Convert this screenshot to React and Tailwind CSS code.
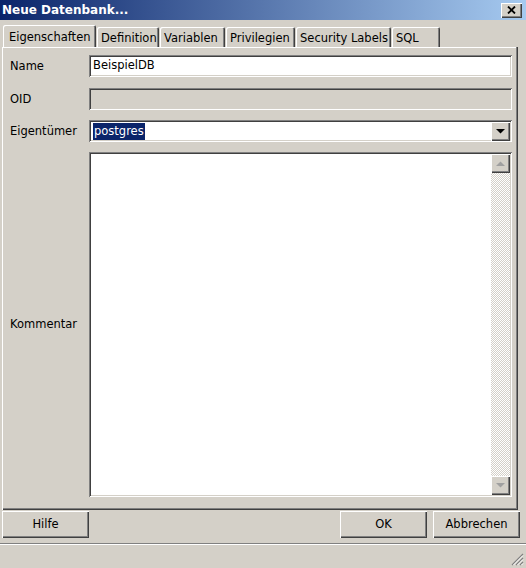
import React from "react";

const raised =
  "shadow-[inset_1px_1px_0_#ffffff,inset_-1px_-1px_0_#404040,inset_-2px_-2px_0_#808080]";
const sunken =
  "shadow-[inset_1px_1px_0_#808080,inset_-1px_-1px_0_#ffffff,inset_2px_2px_0_#404040,inset_-2px_-2px_0_#d4d0c8]";

function Tab({ label, active, w }) {
  return (
    <div
      className={
        "relative flex items-start rounded-t-[2px] bg-[#d4d0c8] shadow-[inset_1px_1px_0_#ffffff,inset_-1px_0_0_#404040,inset_-2px_0_0_#808080] " +
        (active ? "z-10 h-[22px] pl-[6px] pt-[4px]" : "h-[20px] pl-[4px] pt-[3px]")
      }
      style={{ width: w }}
    >
      <span className="whitespace-nowrap leading-[16px]">{label}</span>
    </div>
  );
}

function ScrollBtn({ up, dark }) {
  return (
    <div className={"flex h-[19px] w-[19px] items-center justify-center bg-[#d4d0c8] " + raised}>
      <svg width="9" height="5" viewBox="0 0 9 5">
        {up ? (
          <polygon points="0,5 9,5 4.5,0.5" fill={dark ? "#000" : "#a0a0a0"} />
        ) : (
          <polygon points="0,0 9,0 4.5,4.5" fill={dark ? "#000" : "#a0a0a0"} />
        )}
      </svg>
    </div>
  );
}

function Button({ label, w }) {
  return (
    <div
      className={"flex h-[27px] items-center justify-center bg-[#d4d0c8] " + raised}
      style={{ width: w }}
    >
      {label}
    </div>
  );
}

export default function App() {
  return (
    <div
      className="flex h-[568px] w-[526px] flex-col overflow-hidden bg-[#d4d0c8] text-[11.5px] text-black"
      style={{ fontFamily: '"DejaVu Sans", Verdana, sans-serif' }}
    >
      {/* title bar */}
      <div className="flex h-[20px] items-center justify-between bg-[linear-gradient(90deg,#0a246a,#a6caf0)] pl-[2px] pr-[4px]">
        <span className="text-[12px] font-bold text-white">Neue Datenbank...</span>
        <div className={"flex h-[15px] w-[21px] items-center justify-center bg-[#d4d0c8] " + raised}>
          <svg width="9" height="8" viewBox="0 0 9 8">
            <path d="M1 0.5 L8 7.5 M8 0.5 L1 7.5" stroke="#000" strokeWidth="1.8" />
          </svg>
        </div>
      </div>

      {/* tabs */}
      <div className="flex h-[27px] items-end gap-[1px] pl-[3px]">
        <Tab label="Eigenschaften" active w={93} />
        <Tab label="Definition" w={62} />
        <Tab label="Variablen" w={65} />
        <Tab label="Privilegien" w={69} />
        <Tab label="Security Labels" w={95} />
        <Tab label="SQL" w={48} />
      </div>

      {/* panel */}
      <div className="mx-[2px] flex h-[463px] w-[516px] flex-col bg-[#d4d0c8] pl-[8px] pr-[6px] pt-[8px] pb-[13px] shadow-[inset_1px_0_0_#ffffff,inset_-1px_-1px_0_#404040,inset_-2px_-2px_0_#808080,inset_0_1px_0_#ffffff]">
        <div className="flex h-[22px] items-center">
          <div className="w-[79px] pt-[1px]">Name</div>
          <div className={"flex h-[22px] flex-1 items-center bg-white pl-[4px] " + sunken}>BeispielDB</div>
        </div>
        <div className="mt-[11px] flex h-[22px] items-center">
          <div className="w-[79px] pt-[1px]">OID</div>
          <div className={"h-[22px] flex-1 bg-[#d4d0c8] " + sunken}></div>
        </div>
        <div className="mt-[10px] flex h-[22px] items-center">
          <div className="w-[79px] pt-[1px]">Eigentümer</div>
          <div className={"flex h-[22px] flex-1 items-center bg-white p-[2px] " + sunken}>
            <div className="ml-[2px] flex h-[17px] flex-1 items-center">
              <span className="bg-[#0a246a] px-[1px] leading-[17px] text-white">postgres</span>
            </div>
            <ScrollBtn dark />
          </div>
        </div>
        <div className="mt-[10px] flex flex-1 items-center">
          <div className="w-[79px] pt-[1px]">Kommentar</div>
          <div className={"flex h-full flex-1 justify-end bg-white p-[2px] " + sunken}>
            <div className="flex h-full w-[19px] flex-col bg-[repeating-conic-gradient(#ffffff_0_25%,#d4d0c8_0_50%)] bg-[length:2px_2px]">
              <ScrollBtn up />
              <div className="flex-1"></div>
              <ScrollBtn />
            </div>
          </div>
        </div>
      </div>

      {/* buttons */}
      <div className="mt-[1px] flex h-[27px] items-center pl-[2px] pr-[6px]">
        <Button label="Hilfe" w={87} />
        <div className="flex-1"></div>
        <Button label="OK" w={87} />
        <div className="w-[6px]"></div>
        <Button label="Abbrechen" w={87} />
      </div>

      {/* status bar */}
      <div className="relative mt-[5px] flex-1 border-t border-[#808080] shadow-[inset_0_1px_0_#ffffff]">
        <div className="absolute bottom-[2px] right-[2px]">
          <svg width="13" height="13" viewBox="0 0 13 13">
            <path d="M12 1 L1 12 M12 5 L5 12 M12 9 L9 12" stroke="#808080" strokeWidth="1.2" />
            <path d="M12 2.5 L2.5 12 M12 6.5 L6.5 12 M12 10.5 L10.5 12" stroke="#ffffff" strokeWidth="1" />
          </svg>
        </div>
      </div>
    </div>
  );
}
